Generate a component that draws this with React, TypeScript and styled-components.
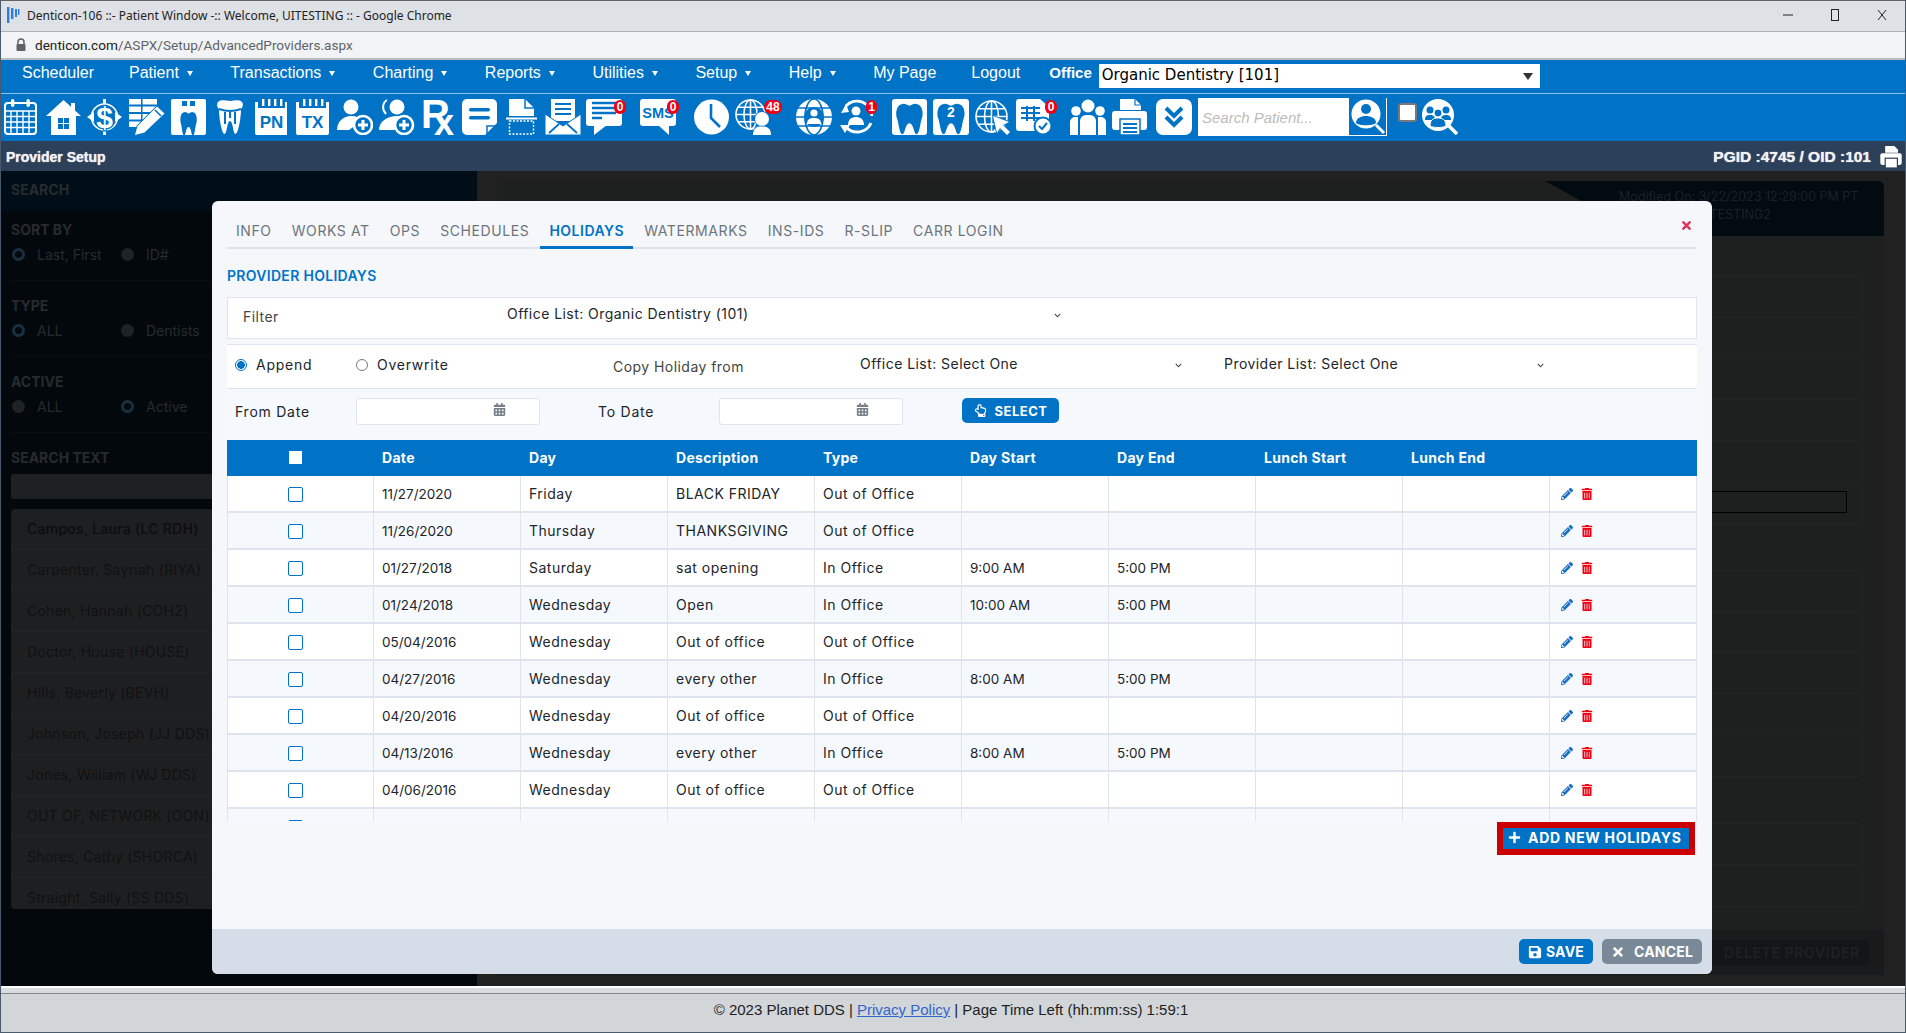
import React from 'react';
import styled, { createGlobalStyle } from 'styled-components';
import {
  FaCalendarAlt,
  FaChevronDown,
  FaPencilAlt,
  FaPlus,
  FaRegHandPointUp,
  FaSave,
  FaTimes,
  FaTrashAlt,
} from 'react-icons/fa';

const BLUE = '#0073c7';
const WHITE = '#fff';
const ARIAL = `"Liberation Sans", Arial, sans-serif`;
const BODY = `Inter, "Noto Sans", sans-serif`;

const GlobalStyle = createGlobalStyle`
  html, body { margin: 0; padding: 0; background: #d2d6d9; overflow: hidden; }
  * { box-sizing: border-box; }
`;

const Page = styled.div`
  width: 1906px;
  height: 1033px;
  display: flex;
  flex-direction: column;
  border-left: 1px solid #4a5a6a;
  border-right: 1px solid #4a5a6a;
  border-top: 1px solid #5f6368;
  border-bottom: 1px solid #4a5a6a;
  font-family: ${BODY};
  overflow: hidden;
`;

/* browser chrome */
const TitleBar = styled.div`
  height: 31px;
  flex: none;
  display: flex;
  align-items: center;
  background: #dee1e6;
  border-bottom: 1px solid #aeb2b6;
  padding: 0 0 2px 6px;
  font: 12px "Noto Sans", sans-serif;
  color: #222;
`;
const TitleText = styled.span`
  margin-left: 7px;
  flex: 1;
`;
const WinButton = styled.span`
  width: 47px;
  display: flex;
  justify-content: center;
  color: #222;
`;
const UrlBar = styled.div`
  height: 28px;
  flex: none;
  display: flex;
  align-items: center;
  gap: 8px;
  padding-left: 14px;
  background: #f1f3f4;
  border-bottom: 2px solid #b9bcbf;
  font: 13.6px Roboto, sans-serif;
  color: #5f6368;
  b {
    font-weight: 400;
    color: #202124;
  }
`;

/* main menu */
const NavBar = styled.nav`
  height: 34px;
  flex: none;
  display: flex;
  align-items: center;
  padding: 0 0 8px 21px;
  background: ${BLUE};
  border-bottom: 1px solid #8fc3ea;
  font: 16px ${ARIAL};
  color: ${WHITE};
`;
const NavItem = styled.span<{ $after: number }>`
  display: flex;
  align-items: center;
  margin-right: ${(p) => p.$after}px;
  white-space: nowrap;
`;
const Caret = styled.i`
  width: 0;
  height: 0;
  margin: 2px 0 0 8px;
  border-left: 3.5px solid transparent;
  border-right: 3.5px solid transparent;
  border-top: 5px solid ${WHITE};
`;
const OfficeLabel = styled.b`
  margin: 0 7px 0 -7px;
  font-size: 15px;
`;
const OfficeSelect = styled.div`
  width: 441px;
  height: 24px;
  margin-top: 7px;
  display: flex;
  align-items: center;
  justify-content: space-between;
  padding: 0 7px 2px 3px;
  background: ${WHITE};
  color: #000;
  font: 15px "DejaVu Sans", sans-serif;
`;
const DarkCaret = styled.i`
  width: 0;
  height: 0;
  margin-top: 2px;
  border-left: 5px solid transparent;
  border-right: 5px solid transparent;
  border-top: 7px solid #333;
`;

/* icon toolbar */
const ToolBar = styled.div`
  height: 47px;
  flex: none;
  display: flex;
  padding: 5px 0 0 3px;
  background: ${BLUE};
`;
const ToolSlot = styled.div<{ $gap: number }>`
  position: relative;
  height: 36px;
  margin-left: ${(p) => p.$gap}px;
  flex: none;
  svg {
    display: block;
  }
`;
const Badge = styled.span<{ $right: number; $w: number }>`
  position: absolute;
  top: 1px;
  right: ${(p) => p.$right}px;
  width: ${(p) => p.$w}px;
  height: 14px;
  border-radius: 7px;
  background: #f00012;
  color: ${WHITE};
  font: bold 12px/14px ${ARIAL};
  text-align: center;
`;
const SearchBox = styled.div`
  width: 189px;
  height: 38px;
  margin: -1px 0 0 6px;
  display: flex;
  justify-content: space-between;
  background: ${WHITE};
  flex: none;
`;
const SearchInput = styled.input`
  width: 150px;
  border: 0;
  outline: 0;
  padding: 0 0 0 4px;
  font: italic 15px ${ARIAL};
  background: transparent;
  &::placeholder {
    color: #bdbdbd;
    opacity: 1;
  }
`;
const SearchButton = styled.span`
  width: 37px;
  height: 37px;
  margin-right: 1px;
  background: ${BLUE};
`;
const ToolCheck = styled.span`
  width: 19px;
  height: 19px;
  margin: 4px 0 0 11px;
  background: ${WHITE};
  border: 2px solid #77787c;
  border-radius: 3px;
  flex: none;
`;

/* page heading */
const PageHeader = styled.div`
  height: 30px;
  flex: none;
  display: flex;
  align-items: center;
  justify-content: space-between;
  padding: 2px 2px 0 5px;
  background: #2d4059;
  color: #f1f1f1;
  font: bold 14px ${ARIAL};
  text-shadow: 0 0 1px #fff;
`;
const PageIds = styled.div`
  display: flex;
  align-items: center;
  gap: 8px;
  font-size: 15.5px;
`;

/* dimmed page behind the dialog */
const Body = styled.div`
  position: relative;
  flex: 1;
  min-height: 0;
  display: flex;
  background: #212121;
`;
const Sidebar = styled.aside`
  width: 476px;
  flex: none;
  background: #03080d;
  color: #262b2e;
  font-size: 14px;
`;
const SearchBand = styled.div`
  height: 40px;
  padding: 10px 0 0 10px;
  background: #010e18;
  font-weight: 700;
  line-height: 18px;
`;
const Section = styled.div<{ $first?: boolean }>`
  margin: 0 0 0 10px;
  padding: ${(p) => (p.$first ? 10 : 16)}px 0 16px;
  border-bottom: 1px solid #0b0f12;
`;
const LastSection = styled.div`
  margin-left: 10px;
  padding-top: 16px;
`;
const SectionTitle = styled.div`
  font-weight: 700;
  line-height: 18px;
`;
const RadioRow = styled.div`
  display: flex;
  margin-top: 5px;
  padding-left: 1px;
  height: 20px;
`;
const RadioOption = styled.label`
  width: 109px;
  display: flex;
  align-items: center;
  gap: 12px;
  white-space: nowrap;
`;
const DimRadio = styled.i<{ $on?: boolean }>`
  width: 13px;
  height: 13px;
  border-radius: 50%;
  background: ${(p) => (p.$on ? '#03080d' : '#1f2326')};
  border: ${(p) => (p.$on ? '3px solid #1a3040' : '0')};
`;
const DimInput = styled.div`
  height: 25px;
  margin: 7px 11px 0 10px;
  border-radius: 3px;
  background: #1f2021;
`;
const ProviderList = styled.ul`
  list-style: none;
  margin: 10px 11px 0 10px;
  padding: 0;
  height: 400px;
  overflow: hidden;
  border-radius: 4px;
  background: #1e1f21;
`;
const ProviderItem = styled.li<{ $active?: boolean }>`
  height: 41px;
  padding-left: 16px;
  line-height: 40px;
  white-space: nowrap;
  border-bottom: 1px solid #232425;
  color: ${(p) => (p.$active ? '#0c0d0e' : '#101112')};
  font-weight: ${(p) => (p.$active ? 500 : 400)};
  font-size: 14px;
  letter-spacing: 0.25px;
`;
const Main = styled.main`
  flex: 1;
  min-width: 0;
  padding: 10px 21px 11px 20px;
  display: flex;
`;
const Panel = styled.div`
  flex: 1;
  display: flex;
  flex-direction: column;
  background: #1e1f1f;
  border-radius: 6px;
`;
const PanelHead = styled.div`
  height: 55px;
  flex: none;
  display: flex;
  justify-content: flex-end;
`;
const ModifiedBadge = styled.div`
  width: 339px;
  padding: 7px 0 0 74px;
  background: #020b12;
  clip-path: polygon(0 0, 100% 0, 100% 100%, 100px 100%);
  border-radius: 0 6px 0 0;
  color: #1b2226;
  font-size: 12.5px;
  line-height: 18px;
  white-space: nowrap;
`;
const PanelBody = styled.div`
  flex: 1;
  padding: 40px 21px 0 23px;
  display: flex;
  flex-direction: column;
  gap: 46px;
`;
const FieldGroup = styled.div`
  border: 1px solid #232424;
  border-radius: 4px;
`;
const FieldRow = styled.div`
  height: 41px;
  padding-top: 9px;
  padding-right: 15px;
  border-bottom: 1px solid #232424;
  &:last-child {
    border-bottom: 0;
  }
`;
const OutlinedField = styled.div`
  height: 22px;
  border: 1px solid #000;
`;
const PanelFooter = styled.div`
  height: 45px;
  flex: none;
  display: flex;
  justify-content: flex-end;
  align-items: center;
  padding-right: 14px;
  background: #191a1b;
`;
const DimButton = styled.div`
  width: 170px;
  height: 25px;
  padding-right: 10px;
  text-align: right;
  border-radius: 5px;
  background: #141516;
  color: #1f2020;
  font-weight: 700;
  font-size: 14px;
  letter-spacing: 0.6px;
  line-height: 25px;
`;

/* dialog */
const Modal = styled.div`
  position: absolute;
  left: 211px;
  top: 30px;
  width: 1500px;
  height: 773px;
  display: flex;
  flex-direction: column;
  background: #f5f7fa;
  border-radius: 6px;
  overflow: hidden;
`;
const ModalBody = styled.div`
  flex: 1;
  min-height: 0;
  padding: 0 15px;
  font-size: 14px;
  letter-spacing: 0.45px;
  color: #212529;
`;
const TabBar = styled.div`
  position: relative;
  height: 48px;
  display: flex;
  gap: 2px;
  padding-top: 15px;
  border-bottom: 2px solid #dfe3ee;
`;
const Tab = styled.div<{ $active?: boolean }>`
  height: 33px;
  padding: 6px 9px 0;
  line-height: 18px;
  font-weight: ${(p) => (p.$active ? 600 : 400)};
  letter-spacing: ${(p) => (p.$active ? 0.5 : 0.6)}px;
  color: ${(p) => (p.$active ? BLUE : '#6c757d')};
  border-bottom: ${(p) => (p.$active ? `3px solid ${BLUE}` : '0')};
  white-space: nowrap;
`;
const CloseButton = styled.span`
  position: absolute;
  right: 4px;
  top: 18px;
  color: #e0335a;
  font-size: 13px;
`;
const Heading = styled.h3`
  margin: 0;
  padding-top: 17px;
  height: 48px;
  line-height: 20px;
  font-size: 14px;
  letter-spacing: 0.3px;
  font-weight: 600;
  color: ${BLUE};
`;
const FilterBox = styled.div`
  height: 42px;
  display: flex;
  background: ${WHITE};
  border: 1.5px solid #dfe3ee;
`;
const FilterLabel = styled.div`
  width: 279px;
  padding: 10px 0 0 15px;
  color: #444;
`;
const DropValue = styled.div<{ $w: number }>`
  width: ${(p) => p.$w}px;
  display: flex;
  justify-content: space-between;
  white-space: nowrap;
  padding-right: 4px;
`;
const FilterDrop = styled(DropValue)`
  padding-top: 7px;
`;
const Chevron = styled.span`
  margin-top: 7px;
  font-size: 7px;
  color: #444;
`;
const CopyRow = styled.div`
  height: 45px;
  margin-top: 5px;
  display: flex;
  align-items: center;
  background: ${WHITE};
  border-top: 1.5px solid #dfe3ee;
  border-bottom: 1.5px solid #dfe3ee;
  padding-left: 8px;
`;
const ModeOption = styled.label<{ $w: number }>`
  width: ${(p) => p.$w}px;
  display: flex;
  align-items: center;
  gap: 9px;
  margin-top: -4px;
  flex: none;
  letter-spacing: 0.75px;
`;
const Radio = styled.i<{ $on?: boolean }>`
  width: 12px;
  height: 12px;
  border-radius: 50%;
  border: 1px solid ${(p) => (p.$on ? BLUE : '#777')};
  background: ${(p) => (p.$on ? `radial-gradient(${BLUE} 0 3.6px, #fff 4px)` : WHITE)};
`;
const CopyLabel = styled.div`
  width: 247px;
  flex: none;
  color: #444;
`;
const CopyDrop = styled(DropValue)`
  margin-top: -6px;
  margin-right: 38px;
  flex: none;
`;
const DateRow = styled.div`
  height: 51px;
  display: flex;
  align-items: flex-start;
  padding: 9px 0 0 8px;
  background: #f5f9fd;
`;
const DateLabel = styled.div`
  width: 121px;
  flex: none;
  line-height: 27px;
  letter-spacing: 0.75px;
`;
const DateInput = styled.div`
  width: 184px;
  height: 27px;
  flex: none;
  margin-right: 58px;
  display: flex;
  justify-content: flex-end;
  padding: 4px 33px 0 0;
  background: ${WHITE};
  border: 1px solid #dfe3ee;
  border-radius: 3px;
  color: #77808a;
  font-size: 13px;
`;
const SelectButton = styled.button`
  width: 97px;
  height: 25px;
  display: flex;
  align-items: center;
  justify-content: center;
  gap: 8px;
  margin-left: 1px;
  border: 0;
  border-radius: 5px;
  background: ${BLUE};
  color: ${WHITE};
  font: 700 13px ${BODY};
  letter-spacing: 0.5px;
`;
const TableClip = styled.div`
  height: 381px;
  overflow: hidden;
`;
const Table = styled.table`
  width: 1470px;
  table-layout: fixed;
  border-collapse: separate;
  border-spacing: 0;
`;
const Th = styled.th`
  height: 36px;
  padding: 0 0 2px 8px;
  text-align: left;
  background: ${BLUE};
  color: ${WHITE};
  font-size: 14px;
  font-weight: 700;
  letter-spacing: 0.3px;
`;
const Tr = styled.tr`
  background: ${WHITE};
  &:nth-child(even) {
    background: #f5f9fd;
  }
`;
const Td = styled.td<{ $numeric?: boolean }>`
  height: 37px;
  padding: 0 0 0 8px;
  border-bottom: 2px solid #dfe3ee;
  border-right: 1px solid #dfe3ee;
  white-space: nowrap;
  font-size: ${(p) => (p.$numeric ? 13.5 : 14)}px;
  letter-spacing: ${(p) => (p.$numeric ? 0 : 0.5)}px;
  &:first-child {
    border-left: 1px solid #dfe3ee;
  }
`;
const CheckBoxCell = styled(Td)`
  padding-left: 60px;
`;
const RowCheck = styled.i`
  display: block;
  width: 15px;
  height: 15px;
  margin-top: 2px;
  border: 1.5px solid ${BLUE};
  border-radius: 2px;
  background: ${WHITE};
`;
const HeadCheck = styled.i`
  display: block;
  width: 13px;
  height: 13px;
  margin-left: 54px;
  background: ${WHITE};
`;
const RowActions = styled.div`
  display: flex;
  align-items: center;
  gap: 8px;
  margin-left: 3px;
  font-size: 12px;
  color: #1a6fc4;
`;
const TrashIcon = styled.span`
  display: flex;
  color: #f00012;
`;
const AddRow = styled.div`
  display: flex;
  justify-content: flex-end;
  margin: 1px 2px 0 0;
`;
const AddButton = styled.button`
  width: 198px;
  height: 33px;
  display: flex;
  align-items: center;
  gap: 7px;
  padding: 0 0 2px 5px;
  border: 6px solid #cc0000;
  background: ${BLUE};
  color: ${WHITE};
  font: 700 14px ${BODY};
  letter-spacing: 0.7px;
  white-space: nowrap;
  svg {
    font-size: 13px;
  }
`;
const ModalFooter = styled.div`
  height: 45px;
  flex: none;
  display: flex;
  align-items: center;
  justify-content: flex-end;
  gap: 9px;
  padding-right: 10px;
  background: #d5dee8;
`;
const FooterButton = styled.button<{ $grey?: boolean }>`
  width: ${(p) => (p.$grey ? 100 : 74)}px;
  height: 25px;
  display: flex;
  align-items: center;
  justify-content: center;
  gap: ${(p) => (p.$grey ? 9 : 4)}px;
  padding: 0;
  border: 0;
  border-radius: 5px;
  background: ${(p) => (p.$grey ? '#7a8998' : BLUE)};
  color: ${WHITE};
  font: 700 14px ${BODY};
  letter-spacing: 0.2px;
  svg {
    font-size: 14px;
  }
`;

/* status strip */
const StatusStrip = styled.footer`
  height: 46px;
  flex: none;
  display: flex;
  align-items: center;
  justify-content: center;
  padding: 0 4px 1px 0;
  background: #d2d6d9;
  border-top: 2px solid ${WHITE};
  box-shadow: inset 0 5px 0 #dadddf, inset 0 6px 0 #7f878c;
  font: 15px ${ARIAL};
  color: #222;
  a {
    margin: 0 4px;
    color: #3366cc;
  }
`;

type Tool = {
  w: number;
  gap: number;
  art: React.ReactNode;
  badge?: { text: string; right: number; w: number };
};

const toothPath =
  'M10 6C14 4 16 7 18 7C20 7 22 4 26 6C31 8 31 16 29 20C28 24 27 33 24.5 33C22 33 22 23 18 23C14 23 14 33 11.5 33C9 33 8 24 7 20C5 16 5 8 10 6Z';

const globeLines = (cx: number, cy: number, r: number, stroke: string, sw: number) => (
  <g fill="none" stroke={stroke} strokeWidth={sw}>
    <circle cx={cx} cy={cy} r={r} />
    <ellipse cx={cx} cy={cy} rx={r * 0.45} ry={r} />
    <path d={`M${cx} ${cy - r}V${cy + r}M${cx - r} ${cy}H${cx + r}M${cx - r * 0.86} ${cy - r * 0.5}H${cx + r * 0.86}M${cx - r * 0.86} ${cy + r * 0.5}H${cx + r * 0.86}`} />
  </g>
);

const notebook = (label: string) => (
  <>
    <rect x="0" y="3" width="33" height="33" rx="2" fill={WHITE} />
    <rect x="2" y="0" width="29" height="9" fill={BLUE} />
    <rect x="0" y="3" width="3" height="6" fill={WHITE} />
    <rect x="30" y="3" width="3" height="6" fill={WHITE} />
    {[7, 13, 19, 25].map((x) => (
      <rect key={x} x={x} y="0" width="2.4" height="7" fill={WHITE} />
    ))}
    <text x="16.5" y="29" textAnchor="middle" fontFamily={ARIAL} fontWeight="700" fontSize="17" fill={BLUE}>
      {label}
    </text>
  </>
);

const personPlus = (extra: boolean) => (
  <>
    {extra && <path d="M9 1C4 4 4 11 8 15" fill="none" stroke={WHITE} strokeWidth="2" />}
    <circle cx={extra ? 19 : 14} cy="8" r="7.5" fill={WHITE} />
    <path d={extra ? 'M1 31C1 22 10 17 19 17C24 17 27 19 29 22L16 31Z' : 'M0 31C0 22 7 17 14 17C19 17 23 19 25 22L12 31Z'} fill={WHITE} />
    <circle cx="26" cy="26" r="9" fill={BLUE} stroke={WHITE} strokeWidth="2.6" />
    <path d="M26 21V31M21 26H31" stroke={WHITE} strokeWidth="3" />
  </>
);

const tools: Tool[] = [
  {
    w: 33,
    gap: 0,
    art: (
      <>
        <rect x="1" y="4" width="31" height="31" rx="3" fill="none" stroke={WHITE} strokeWidth="2" />
        <path d="M1 12H32M1 17.5H32M1 23H32M1 28.5H32M7 12V35M13 12V35M19 12V35M25 12V35" stroke={WHITE} strokeWidth="1.4" />
        <rect x="7" y="0" width="3.4" height="8" rx="1.7" fill={WHITE} />
        <rect x="22.5" y="0" width="3.4" height="8" rx="1.7" fill={WHITE} />
      </>
    ),
  },
  {
    w: 35,
    gap: 9,
    art: (
      <>
        <path d="M17.5 1L35 17H30V36H5V17H0Z" fill={WHITE} />
        <rect x="25" y="4" width="4" height="9" fill={WHITE} />
        <path d="M12 19H17V24H12ZM18 19H23V24H18ZM12 25H17V30H12ZM18 25H23V30H18Z" fill={BLUE} />
      </>
    ),
  },
  {
    w: 35,
    gap: 6,
    art: (
      <>
        <circle cx="17.5" cy="18" r="13" fill="none" stroke={WHITE} strokeWidth="1.6" />
        <path d="M0 18L7 13V23ZM35 18L28 13V23Z" fill={WHITE} />
        <path d="M16 0H19V36H16Z" fill={WHITE} />
        <text x="17.5" y="29" textAnchor="middle" fontFamily={ARIAL} fontWeight="700" fontSize="30" fill={WHITE} stroke={BLUE} strokeWidth="2.5" paintOrder="stroke">
          $
        </text>
      </>
    ),
  },
  {
    w: 36,
    gap: 7,
    art: (
      <>
        <path d="M0 0H28V5.5H0ZM0 7.5H28V13H0ZM0 15H22V20.5H0ZM0 22.5H15V28H0Z" fill={WHITE} />
        <path d="M12 0H13.5V28H12Z" fill={BLUE} />
        <path d="M6 36L8.5 27L28 7.5L35.5 14.5L15.5 33.5Z" fill={WHITE} stroke={BLUE} strokeWidth="1.8" paintOrder="stroke" />
        <path d="M26 11L32 17" stroke={BLUE} strokeWidth="1.6" />
      </>
    ),
  },
  {
    w: 35,
    gap: 6,
    art: (
      <>
        <rect width="35" height="36" rx="2" fill={WHITE} />
        <rect x="11" y="2" width="5" height="5" fill={BLUE} />
        <rect x="19" y="2" width="5" height="5" fill={BLUE} />
        <path d={toothPath} fill={BLUE} transform="translate(5.5 8.5) scale(0.67 0.85)" />
      </>
    ),
  },
  {
    w: 28,
    gap: 10,
    art: (
      <>
        <path d="M2 3C6 0 10 2 14 2C18 2 22 0 26 3C28 6 26 9 25 10C25 20 22 35 19.5 35C17 35 17 22 14 22C11 22 11 35 8.5 35C6 35 3 20 3 10C2 9 0 6 2 3Z" fill={WHITE} />
        <path d="M3 10Q14 14 25 10M9 13V25M19 13V25M14 12V19" fill="none" stroke={BLUE} strokeWidth="2" />
      </>
    ),
  },
  { w: 32, gap: 11, art: notebook('PN') },
  { w: 33, gap: 9, art: notebook('TX') },
  { w: 36, gap: 8, art: personPlus(false) },
  { w: 37, gap: 5, art: personPlus(true) },
  {
    w: 33,
    gap: 6,
    art: (
      <text fontFamily={ARIAL} fontWeight="700" fill={WHITE}>
        <tspan x="0" y="29" fontSize="40">R</tspan>
        <tspan x="13" y="36" fontSize="36">x</tspan>
      </text>
    ),
  },
  {
    w: 35,
    gap: 8,
    art: (
      <>
        <path d="M5 0H30A5 5 0 0 1 35 5V24L23 36H5A5 5 0 0 1 0 31V5A5 5 0 0 1 5 0Z" fill={WHITE} />
        <path d="M25 35V27H34" fill="none" stroke={BLUE} strokeWidth="1.5" />
        <rect x="7" y="9" width="21" height="3.5" rx="1.7" fill={BLUE} />
        <rect x="7" y="17" width="21" height="3.5" rx="1.7" fill={BLUE} />
      </>
    ),
  },
  {
    w: 31,
    gap: 9,
    art: (
      <>
        <path d="M3 0H19L28 9V17H3Z" fill={WHITE} />
        <path d="M19 0V9H28" fill="none" stroke={BLUE} strokeWidth="1.5" />
        <rect x="0" y="18.5" width="31" height="2" fill={WHITE} />
        <rect x="3.5" y="22" width="24" height="13" fill="none" stroke={WHITE} strokeWidth="1.5" strokeDasharray="2 1.5" />
      </>
    ),
  },
  {
    w: 36,
    gap: 8,
    art: (
      <>
        <path d="M6 0H30V22H6Z" fill={WHITE} />
        <path d="M10 5H26M10 10H26M10 15H26" stroke={BLUE} strokeWidth="2" />
        <path d="M0 15L18 27L36 15V36H0Z" fill={WHITE} stroke={BLUE} strokeWidth="1" />
        <path d="M4 34L14 25M32 34L22 25" stroke={BLUE} strokeWidth="1.8" />
      </>
    ),
  },
  {
    w: 36,
    gap: 5,
    badge: { text: '0', right: -4, w: 12 },
    art: (
      <>
        <rect width="36" height="27" rx="3" fill={WHITE} />
        <path d="M8 26H21L8 36Z" fill={WHITE} />
        <path d="M6 4H30M6 9H30M6 14H30M6 19H16" stroke={BLUE} strokeWidth="2.4" />
      </>
    ),
  },
  {
    w: 36,
    gap: 18,
    badge: { text: '0', right: -3, w: 12 },
    art: (
      <>
        <rect width="36" height="27" rx="3" fill={WHITE} />
        <path d="M18 26H29V36Z" fill={WHITE} />
        <text x="18" y="19" textAnchor="middle" fontFamily={ARIAL} fontWeight="700" fontSize="14.5" fill={BLUE}>
          SMS
        </text>
      </>
    ),
  },
  {
    w: 35,
    gap: 18,
    art: (
      <>
        <circle cx="17.5" cy="18" r="17.5" fill={WHITE} />
        <path d="M17 5V19L26 28" fill="none" stroke={BLUE} strokeWidth="2.6" />
      </>
    ),
  },
  {
    w: 36,
    gap: 6,
    badge: { text: '48', right: -11, w: 18 },
    art: (
      <>
        {globeLines(15.5, 15.5, 14.5, WHITE, 1.6)}
        <circle cx="27" cy="20" r="7" fill={WHITE} stroke={BLUE} strokeWidth="1.5" paintOrder="stroke" />
        <path d="M18 36C18 29 22 27.5 27 27.5C32 27.5 36 29 36 36Z" fill={WHITE} stroke={BLUE} strokeWidth="1.5" paintOrder="stroke" />
      </>
    ),
  },
  {
    w: 36,
    gap: 25,
    art: (
      <>
        <circle cx="18" cy="18" r="18" fill={WHITE} />
        <ellipse cx="18" cy="18" rx="9" ry="18" fill="none" stroke={BLUE} strokeWidth="1.6" />
        <path d="M2 9H34M2 27H34M0 18H36" stroke={BLUE} strokeWidth="1.6" />
        <circle cx="18" cy="18" r="10" fill={BLUE} />
        <circle cx="18" cy="14" r="3.6" fill={WHITE} />
        <path d="M11 25C11 20 14 19 18 19C22 19 25 20 25 25Z" fill={WHITE} />
      </>
    ),
  },
  {
    w: 33,
    gap: 8,
    badge: { text: '1', right: -4, w: 11 },
    art: (
      <>
        <path d="M6 7A15 15 0 0 1 32 17M31 24A15 15 0 0 1 6 28" fill="none" stroke={WHITE} strokeWidth="3" />
        <path d="M1 14L9 13L6 5Z" fill={WHITE} />
        <path d="M0 26H10L5 34Z" fill={WHITE} />
        <circle cx="16" cy="12" r="4.5" fill={WHITE} />
        <path d="M8 26C8 20 12 18 16 18C20 18 24 20 24 26Z" fill={WHITE} />
      </>
    ),
  },
  {
    w: 35,
    gap: 19,
    art: (
      <>
        <rect width="35" height="36" rx="3" fill={WHITE} />
        <path d={toothPath} fill={BLUE} transform="translate(-2 -1) scale(1.08 1.1)" />
      </>
    ),
  },
  {
    w: 36,
    gap: 6,
    art: (
      <>
        <rect width="36" height="36" rx="3" fill={WHITE} />
        <path d={toothPath} fill={BLUE} transform="translate(-2 -1) scale(1.11 1.1)" />
        <text x="18" y="18" textAnchor="middle" fontFamily={ARIAL} fontWeight="700" fontSize="14" fill={WHITE}>
          2
        </text>
      </>
    ),
  },
  {
    w: 35,
    gap: 6,
    art: (
      <>
        {globeLines(16.5, 17.5, 15.5, WHITE, 1.6)}
        <path d="M18 17L34 23L28 26L35 33L32 36L25 29L22 34Z" fill={WHITE} stroke={BLUE} strokeWidth="1.6" paintOrder="stroke" />
      </>
    ),
  },
  {
    w: 36,
    gap: 6,
    badge: { text: '0', right: -5, w: 12 },
    art: (
      <>
        <path d="M3 0H24L33 8V29A3 3 0 0 1 30 32H3A3 3 0 0 1 0 29V3A3 3 0 0 1 3 0Z" fill={WHITE} />
        <path d="M5 9H24M5 14H24M5 19H24M11 7V22M18 7V22" stroke={BLUE} strokeWidth="2" />
        <circle cx="27" cy="27" r="8.5" fill={WHITE} stroke={BLUE} strokeWidth="2" />
        <path d="M23 27L26 30L31 24" fill="none" stroke={BLUE} strokeWidth="2" />
      </>
    ),
  },
  {
    w: 36,
    gap: 18,
    art: (
      <>
        <circle cx="18" cy="7" r="6.5" fill={WHITE} />
        <circle cx="6" cy="12" r="4.8" fill={WHITE} />
        <circle cx="30" cy="12" r="4.8" fill={WHITE} />
        <path d="M10 36V22A6 6 0 0 1 16 16H20A6 6 0 0 1 26 22V36Z" fill={WHITE} />
        <path d="M0 36V23A5 5 0 0 1 5 18H8V36ZM36 36V23A5 5 0 0 0 31 18H28V36Z" fill={WHITE} />
      </>
    ),
  },
  {
    w: 35,
    gap: 6,
    art: (
      <>
        <path d="M8 0H23L29 6V11H8Z" fill={WHITE} />
        <path d="M23 0V6H29" fill="none" stroke={BLUE} strokeWidth="1.2" />
        <rect y="12" width="35" height="19" rx="3" fill={WHITE} />
        <rect x="8" y="20" width="20" height="16" fill={WHITE} stroke={BLUE} strokeWidth="1.5" />
        <path d="M11 25H25M11 29H25M11 33H25" stroke={BLUE} strokeWidth="1.8" />
      </>
    ),
  },
  {
    w: 36,
    gap: 9,
    art: (
      <>
        <rect width="36" height="36" rx="7" fill={WHITE} />
        <path d="M10 9L18 17L26 9M10 18L18 26L26 18" fill="none" stroke={BLUE} strokeWidth="4" />
      </>
    ),
  },
];

const PersonSearch = () => (
  <svg width="37" height="37" viewBox="0 0 37 37">
    <circle cx="17" cy="16" r="14.5" fill={WHITE} />
    <path d="M27 27L35 35" stroke={WHITE} strokeWidth="3" />
    <circle cx="17" cy="11" r="5" fill={BLUE} />
    <path d="M7 25C7 20 12 18 17 18C22 18 27 20 27 25C24 28 10 28 7 25Z" fill={BLUE} />
  </svg>
);

const GroupSearch = () => (
  <svg width="36" height="36" viewBox="0 0 36 36">
    <circle cx="16" cy="16" r="16" fill={WHITE} />
    <path d="M27 27L35 35" stroke={WHITE} strokeWidth="3.5" />
    <circle cx="8" cy="11" r="3.5" fill={BLUE} />
    <circle cx="24" cy="11" r="3.5" fill={BLUE} />
    <circle cx="16" cy="14" r="4" fill={BLUE} stroke={WHITE} strokeWidth="1" />
    <path d="M3 21C3 17 5 16 8 16C11 16 13 17 13 21ZM19 21C19 17 21 16 24 16C27 16 29 17 29 21Z" fill={BLUE} />
    <path d="M8 27C8 21 11 19 16 19C21 19 24 21 24 27C21 29 11 29 8 27Z" fill={BLUE} stroke={WHITE} strokeWidth="1" />
  </svg>
);

const navItems = [
  { label: 'Scheduler', after: 35 },
  { label: 'Patient', caret: true, after: 37.5 },
  { label: 'Transactions', caret: true, after: 37.5 },
  { label: 'Charting', caret: true, after: 37.5 },
  { label: 'Reports', caret: true, after: 37.5 },
  { label: 'Utilities', caret: true, after: 37.5 },
  { label: 'Setup', caret: true, after: 37.5 },
  { label: 'Help', caret: true, after: 37.5 },
  { label: 'My Page', after: 35 },
  { label: 'Logout', after: 36 },
];

const tabs = ['INFO', 'WORKS AT', 'OPS', 'SCHEDULES', 'HOLIDAYS', 'WATERMARKS', 'INS-IDS', 'R-SLIP', 'CARR LOGIN'];

const providers = [
  'Campos, Laura (LC RDH)',
  'Carpenter, Sayriah (RIYA)',
  'Cohen, Hannah (COH2)',
  'Doctor, House (HOUSE)',
  'Hills, Beverly (BEVH)',
  'Johnson, Joseph (JJ DDS)',
  'Jones, William (WJ DDS)',
  'OUT OF, NETWORK (OON)',
  'Shores, Cathy (SHORCA)',
  'Straight, Sally (SS DDS)',
];

const holidays = [
  ['11/27/2020', 'Friday', 'BLACK FRIDAY', 'Out of Office', '', ''],
  ['11/26/2020', 'Thursday', 'THANKSGIVING', 'Out of Office', '', ''],
  ['01/27/2018', 'Saturday', 'sat opening', 'In Office', '9:00 AM', '5:00 PM'],
  ['01/24/2018', 'Wednesday', 'Open', 'In Office', '10:00 AM', '5:00 PM'],
  ['05/04/2016', 'Wednesday', 'Out of office', 'Out of Office', '', ''],
  ['04/27/2016', 'Wednesday', 'every other', 'In Office', '8:00 AM', '5:00 PM'],
  ['04/20/2016', 'Wednesday', 'Out of office', 'Out of Office', '', ''],
  ['04/13/2016', 'Wednesday', 'every other', 'In Office', '8:00 AM', '5:00 PM'],
  ['04/06/2016', 'Wednesday', 'Out of office', 'Out of Office', '', ''],
  ['03/30/2016', 'Wednesday', 'every other', 'In Office', '8:00 AM', '5:00 PM'],
];

const columns = ['Date', 'Day', 'Description', 'Type', 'Day Start', 'Day End', 'Lunch Start', 'Lunch End', ''];

const App = () => (
  <Page>
    <GlobalStyle />
    <TitleBar>
      <svg width="13" height="16" viewBox="0 0 13 16">
        <path d="M0 0H2.4V16H0ZM4 1H6.4V12H4ZM8 2H10V10H8ZM11 2H12.4V8H11Z" fill="#2a7de1" />
      </svg>
      <TitleText>Denticon-106 ::- Patient Window -:: Welcome, UITESTING :: - Google Chrome</TitleText>
      <WinButton>
        <svg width="12" height="12" viewBox="0 0 12 12"><path d="M1 6H11" stroke="#222" /></svg>
      </WinButton>
      <WinButton>
        <svg width="12" height="12" viewBox="0 0 12 12"><rect x="2.5" y="0.5" width="7" height="11" fill="none" stroke="#222" /></svg>
      </WinButton>
      <WinButton>
        <svg width="12" height="12" viewBox="0 0 12 12"><path d="M2 1L10 11M10 1L2 11" stroke="#222" /></svg>
      </WinButton>
    </TitleBar>
    <UrlBar>
      <svg width="12" height="14" viewBox="0 0 12 14">
        <path d="M3 6V4A3 3 0 0 1 9 4V6" fill="none" stroke="#5f6368" strokeWidth="1.5" />
        <rect x="1.5" y="6" width="9" height="7" rx="1" fill="#5f6368" />
      </svg>
      <span>
        <b>denticon.com</b>/ASPX/Setup/AdvancedProviders.aspx
      </span>
    </UrlBar>
    <NavBar>
      {navItems.map((item) => (
        <NavItem key={item.label} $after={item.after}>
          {item.label}
          {item.caret && <Caret />}
        </NavItem>
      ))}
      <OfficeLabel>Office</OfficeLabel>
      <OfficeSelect>
        Organic Dentistry [101]
        <DarkCaret />
      </OfficeSelect>
    </NavBar>
    <ToolBar>
      {tools.map((tool, i) => (
        <ToolSlot key={i} $gap={tool.gap}>
          <svg width={tool.w} height="36" viewBox={`0 0 ${tool.w} 36`}>
            {tool.art}
          </svg>
          {tool.badge && (
            <Badge $right={tool.badge.right} $w={tool.badge.w}>
              {tool.badge.text}
            </Badge>
          )}
        </ToolSlot>
      ))}
      <SearchBox>
        <SearchInput placeholder="Search Patient..." />
        <SearchButton>
          <PersonSearch />
        </SearchButton>
      </SearchBox>
      <ToolCheck />
      <ToolSlot $gap={5}>
        <GroupSearch />
      </ToolSlot>
    </ToolBar>
    <PageHeader>
      Provider Setup
      <PageIds>
        PGID :4745 / OID :101
        <svg width="24" height="22" viewBox="0 0 35 36">
          <path d="M8 0H23L29 6V11H8Z" fill={WHITE} />
          <rect y="12" width="35" height="19" rx="3" fill={WHITE} />
          <rect x="8" y="20" width="20" height="16" fill={WHITE} stroke="#2d4059" strokeWidth="2" />
        </svg>
      </PageIds>
    </PageHeader>
    <Body>
      <Sidebar>
        <SearchBand>SEARCH</SearchBand>
        <Section $first>
          <SectionTitle>SORT BY</SectionTitle>
          <RadioRow>
            <RadioOption><DimRadio $on />Last, First</RadioOption>
            <RadioOption><DimRadio />ID#</RadioOption>
          </RadioRow>
        </Section>
        <Section>
          <SectionTitle>TYPE</SectionTitle>
          <RadioRow>
            <RadioOption><DimRadio $on />ALL</RadioOption>
            <RadioOption><DimRadio />Dentists</RadioOption>
          </RadioRow>
        </Section>
        <Section>
          <SectionTitle>ACTIVE</SectionTitle>
          <RadioRow>
            <RadioOption><DimRadio />ALL</RadioOption>
            <RadioOption><DimRadio $on />Active</RadioOption>
          </RadioRow>
        </Section>
        <LastSection>
          <SectionTitle>SEARCH TEXT</SectionTitle>
        </LastSection>
        <DimInput />
        <ProviderList>
          {providers.map((name, i) => (
            <ProviderItem key={name} $active={i === 0}>
              {name}
            </ProviderItem>
          ))}
        </ProviderList>
      </Sidebar>
      <Main>
        <Panel>
          <PanelHead>
            <ModifiedBadge>
              Modified On: 3/22/2023 12:29:00 PM PT
              <br />
              Modified By: UITESTING2
            </ModifiedBadge>
          </PanelHead>
          <PanelBody>
            <FieldGroup>
              <FieldRow /><FieldRow /><FieldRow /><FieldRow /><FieldRow />
              <FieldRow><OutlinedField /></FieldRow>
            </FieldGroup>
            <FieldGroup>
              <FieldRow /><FieldRow /><FieldRow /><FieldRow /><FieldRow />
            </FieldGroup>
            <FieldGroup>
              <FieldRow /><FieldRow />
            </FieldGroup>
          </PanelBody>
          <PanelFooter>
            <DimButton>DELETE PROVIDER</DimButton>
          </PanelFooter>
        </Panel>
      </Main>
      <Modal>
        <ModalBody>
          <TabBar>
            {tabs.map((tab) => (
              <Tab key={tab} $active={tab === 'HOLIDAYS'}>
                {tab}
              </Tab>
            ))}
            <CloseButton><FaTimes /></CloseButton>
          </TabBar>
          <Heading>PROVIDER HOLIDAYS</Heading>
          <FilterBox>
            <FilterLabel>Filter</FilterLabel>
            <FilterDrop $w={558}>
              Office List: Organic Dentistry (101)
              <Chevron><FaChevronDown /></Chevron>
            </FilterDrop>
          </FilterBox>
          <CopyRow>
            <ModeOption $w={121}><Radio $on />Append</ModeOption>
            <ModeOption $w={257}><Radio />Overwrite</ModeOption>
            <CopyLabel>Copy Holiday from</CopyLabel>
            <CopyDrop $w={326}>
              Office List: Select One
              <Chevron><FaChevronDown /></Chevron>
            </CopyDrop>
            <CopyDrop $w={324}>
              Provider List: Select One
              <Chevron><FaChevronDown /></Chevron>
            </CopyDrop>
          </CopyRow>
          <DateRow>
            <DateLabel>From Date</DateLabel>
            <DateInput><FaCalendarAlt /></DateInput>
            <DateLabel>To Date</DateLabel>
            <DateInput><FaCalendarAlt /></DateInput>
            <SelectButton><FaRegHandPointUp />SELECT</SelectButton>
          </DateRow>
          <TableClip>
            <Table>
              <thead>
                <tr>
                  <Th><HeadCheck /></Th>
                  {columns.map((col, i) => (
                    <Th key={i}>{col}</Th>
                  ))}
                </tr>
              </thead>
              <tbody>
                {holidays.map((row) => (
                  <Tr key={row[0]}>
                    <CheckBoxCell><RowCheck /></CheckBoxCell>
                    {row.map((cell, i) => (
                      <Td key={i} $numeric={i === 0 || i > 3}>{cell}</Td>
                    ))}
                    <Td />
                    <Td />
                    <Td>
                      <RowActions>
                        <FaPencilAlt />
                        <TrashIcon><FaTrashAlt /></TrashIcon>
                      </RowActions>
                    </Td>
                  </Tr>
                ))}
              </tbody>
            </Table>
          </TableClip>
          <AddRow>
            <AddButton><FaPlus />ADD NEW HOLIDAYS</AddButton>
          </AddRow>
        </ModalBody>
        <ModalFooter>
          <FooterButton><FaSave />SAVE</FooterButton>
          <FooterButton $grey><FaTimes />CANCEL</FooterButton>
        </ModalFooter>
      </Modal>
    </Body>
    <StatusStrip>
      © 2023 Planet DDS |<a href="#privacy">Privacy Policy</a>| Page Time Left (hh:mm:ss) 1:59:1
    </StatusStrip>
  </Page>
);

export default App;
